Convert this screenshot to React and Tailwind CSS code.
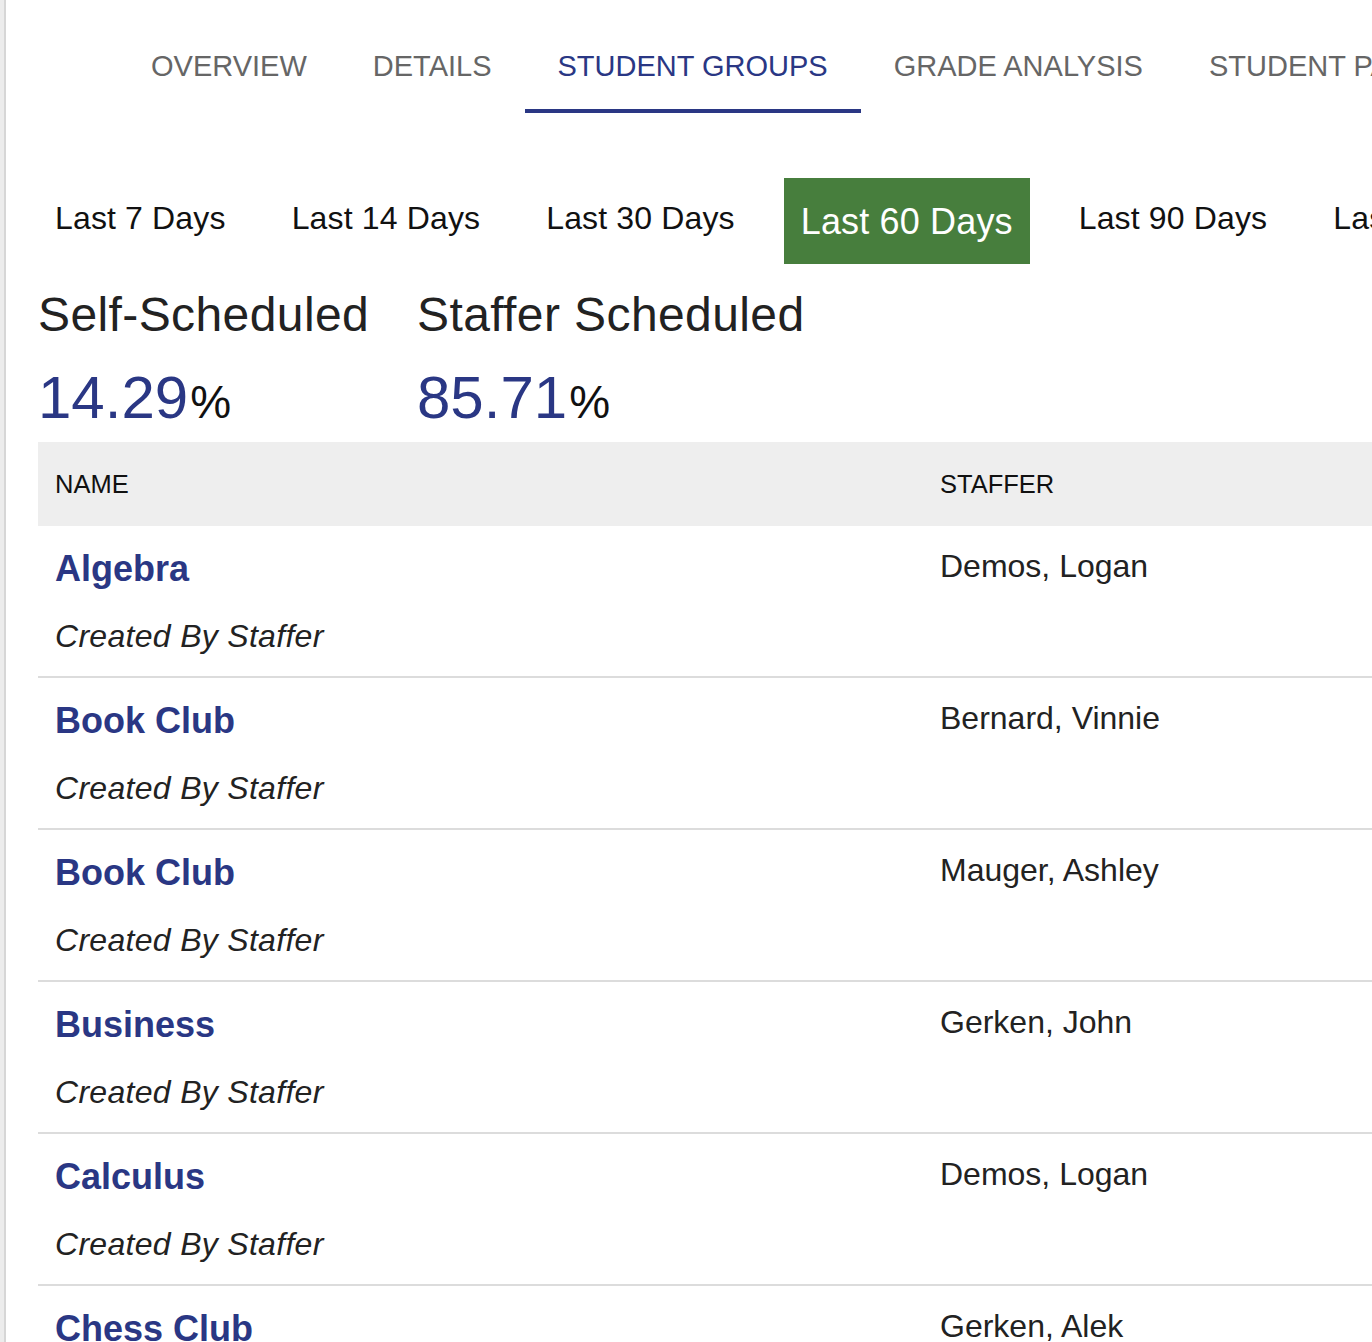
import React from "react";

const tabs = ["OVERVIEW", "DETAILS", "STUDENT GROUPS", "GRADE ANALYSIS", "STUDENT PASSES"];
const ranges = ["Last 7 Days", "Last 14 Days", "Last 30 Days", "Last 60 Days", "Last 90 Days", "Last 180 Days"];
const groups = [
  { name: "Algebra", staffer: "Demos, Logan" },
  { name: "Book Club", staffer: "Bernard, Vinnie" },
  { name: "Book Club", staffer: "Mauger, Ashley" },
  { name: "Business", staffer: "Gerken, John" },
  { name: "Calculus", staffer: "Demos, Logan" },
  { name: "Chess Club", staffer: "Gerken, Alek" },
];

function Share({ label, value }) {
  return (
    <div>
      <div className="text-[48px] leading-[55px] tracking-[0.4px] text-[#222222] whitespace-nowrap">{label}</div>
      <div className="mt-[21px] flex h-[69px] items-baseline whitespace-nowrap">
        <span className="text-[60px] leading-[69px] text-[#2a3784]">{value}</span>
        <span className="ml-[2px] text-[46px] leading-[69px] text-[#111111]">%</span>
      </div>
    </div>
  );
}

export default function App() {
  return (
    <div className="flex h-[1342px] w-[1372px] overflow-hidden bg-white font-['Liberation_Sans',Arial,sans-serif]">
      {/* side rail edge */}
      <div className="w-[6px] shrink-0 bg-[#ececec] border-r-2 border-[#d6d6d6]" />

      <main className="flex-1 min-w-0 overflow-hidden">
        {/* section tabs */}
        <nav className="flex pl-[112px] whitespace-nowrap">
          {tabs.map((t) => {
            const active = t === "STUDENT GROUPS";
            return (
              <div
                key={t}
                className={`shrink-0 px-[33px] pt-[50px] pb-[26px] border-b-4 text-[29px] leading-[33px] ${
                  active ? "border-[#2a3784] text-[#2a3784]" : "border-transparent text-[#666666]"
                }`}
              >
                {t}
              </div>
            );
          })}
        </nav>

        <div className="pl-[32px]">
          {/* date range filter */}
          <div className="mt-[65px] flex h-[86px] items-center gap-[32px] whitespace-nowrap">
            {ranges.map((r) => {
              const active = r === "Last 60 Days";
              return active ? (
                <div
                  key={r}
                  className="shrink-0 flex h-[86px] items-center bg-[#477e3d] px-[17px] text-[36px] leading-[41px] tracking-[0.15px] text-white"
                >
                  {r}
                </div>
              ) : (
                <div key={r} className="shrink-0 mb-[6px] px-[17px] text-[32px] leading-[37px] tracking-[0.15px] text-[#111111]">
                  {r}
                </div>
              );
            })}
          </div>

          {/* scheduling split */}
          <div className="mt-[23px] flex">
            <div className="w-[379px] shrink-0">
              <Share label="Self-Scheduled" value="14.29" />
            </div>
            <div className="shrink-0">
              <Share label="Staffer Scheduled" value="85.71" />
            </div>
          </div>

          {/* groups table */}
          <div className="mt-[10px] w-[1400px]">
            <div className="grid h-[84px] grid-cols-[885px_1fr] items-center bg-[#eeeeee] text-[25.5px] text-[#111111]">
              <div className="pl-[17px]">NAME</div>
              <div className="pl-[17px]">STAFFER</div>
            </div>
            {groups.map((g, i) => (
              <div key={i} className="grid grid-cols-[885px_1fr] border-b-2 border-[#dcdcdc]">
                <div className="pl-[17px] pt-[22px] pb-[21px]">
                  <div className="text-[36px] leading-[41px] font-bold text-[#2a3784]">{g.name}</div>
                  <div className="mt-[29px] text-[32px] leading-[37px] italic tracking-[0.3px] text-[#222222]">
                    Created By Staffer
                  </div>
                </div>
                <div className="pl-[17px] pt-[22px] text-[32px] leading-[37px] text-[#222222]">{g.staffer}</div>
              </div>
            ))}
          </div>
        </div>
      </main>
    </div>
  );
}
